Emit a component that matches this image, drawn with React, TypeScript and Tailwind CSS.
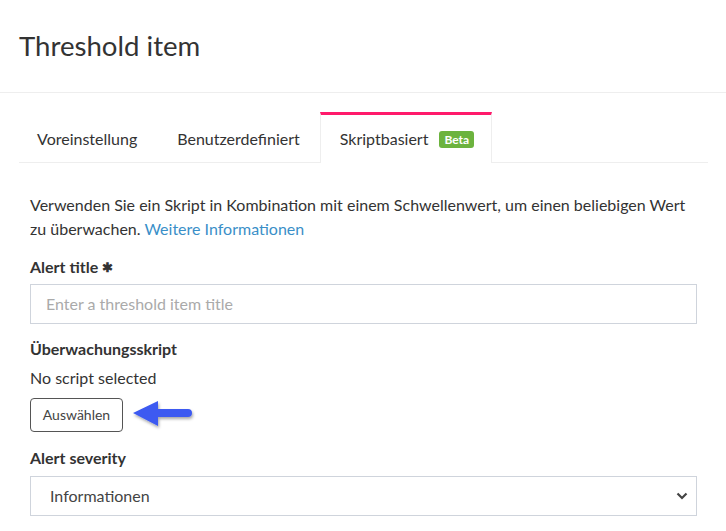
import React from "react";

function Arrow() {
  return (
    <svg width="66" height="36" viewBox="0 0 66 36" className="ml-[8px]" style={{ overflow: "visible" }}>
      <defs>
        <filter id="sh" x="-20%" y="-40%" width="150%" height="200%">
          <feDropShadow dx="1" dy="2" stdDeviation="1.5" floodColor="#000" floodOpacity="0.35" />
        </filter>
      </defs>
      <g filter="url(#sh)" fill="#3d5af1">
        <path d="M2 16 L27 4 L27 12 L57 12 Q61 12 61 16 Q61 20 57 20 L27 20 L27 29 Z" />
      </g>
    </svg>
  );
}

export default function App() {
  return (
    <div className="w-[726px] h-[531px] bg-white text-[#333] overflow-hidden" style={{ fontFamily: "Lato, 'Noto Sans', sans-serif" }}>
      <div className="h-[93px] px-[19px] flex items-center border-b border-[#eeeeee]">
        <h1 className="text-[27.6px] leading-none text-[#333]">Threshold item</h1>
      </div>
      <div className="pl-[19px] pr-[18px] pt-[19px]">
        <div className="flex h-[51px] text-[16px]">
          <div className="pl-[18px] pr-[20px] flex items-center border-b border-[#eeeeee] pt-[3px]">Voreinstellung</div>
          <div className="pl-[20px] pr-[20px] flex items-center border-b border-[#eeeeee] pt-[3px]">Benutzerdefiniert</div>
          <div className="pl-[19px] pr-[17px] flex items-center border-t-[3px] border-t-[#ff1a6b] border-x border-x-[#eeeeee]">
            <span>Skriptbasiert</span>
            <span className="ml-[11px] bg-[#6cb33e] text-white font-bold text-[12px] leading-[17px] px-[5px] rounded-[3px]">Beta</span>
          </div>
          <div className="flex-1 border-b border-[#eeeeee]"></div>
        </div>
        <div className="px-[11px] pt-[30px] text-[16px] leading-[24px]">
          <p>
            Verwenden Sie ein Skript in Kombination mit einem Schwellenwert, um einen beliebigen Wert zu überwachen.{" "}
            <a className="text-[#3a8fc8]">Weitere Informationen</a>
          </p>
          <div className="mt-[14px] font-bold flex items-center">
            Alert title <span className="ml-[4px] text-[13px]">✱</span>
          </div>
          <div className="mt-[5px] h-[40px] border border-[#cfd4dc] flex items-center px-[15px] text-[#aaaaaa]">
            Enter a threshold item title
          </div>
          <div className="mt-[13px] font-bold">Überwachungsskript</div>
          <div className="mt-[5px]">No script selected</div>
          <div className="mt-[7px] flex items-center">
            <div className="h-[34px] w-[93px] border border-[#555] rounded-[4px] flex items-center justify-center text-[14px] text-[#444]">
              Auswählen
            </div>
            <Arrow />
          </div>
          <div className="mt-[13px] font-bold">Alert severity</div>
          <div className="mt-[6px] h-[40px] border border-[#cfd4dc] flex items-center justify-between pl-[19px] pr-[8px] text-[#444]">
            <span>Informationen</span>
            <svg width="12" height="8" viewBox="0 0 12 8">
              <path d="M1.5 1.5 L6 6 L10.5 1.5" fill="none" stroke="#444" strokeWidth="2.2" />
            </svg>
          </div>
        </div>
      </div>
    </div>
  );
}
